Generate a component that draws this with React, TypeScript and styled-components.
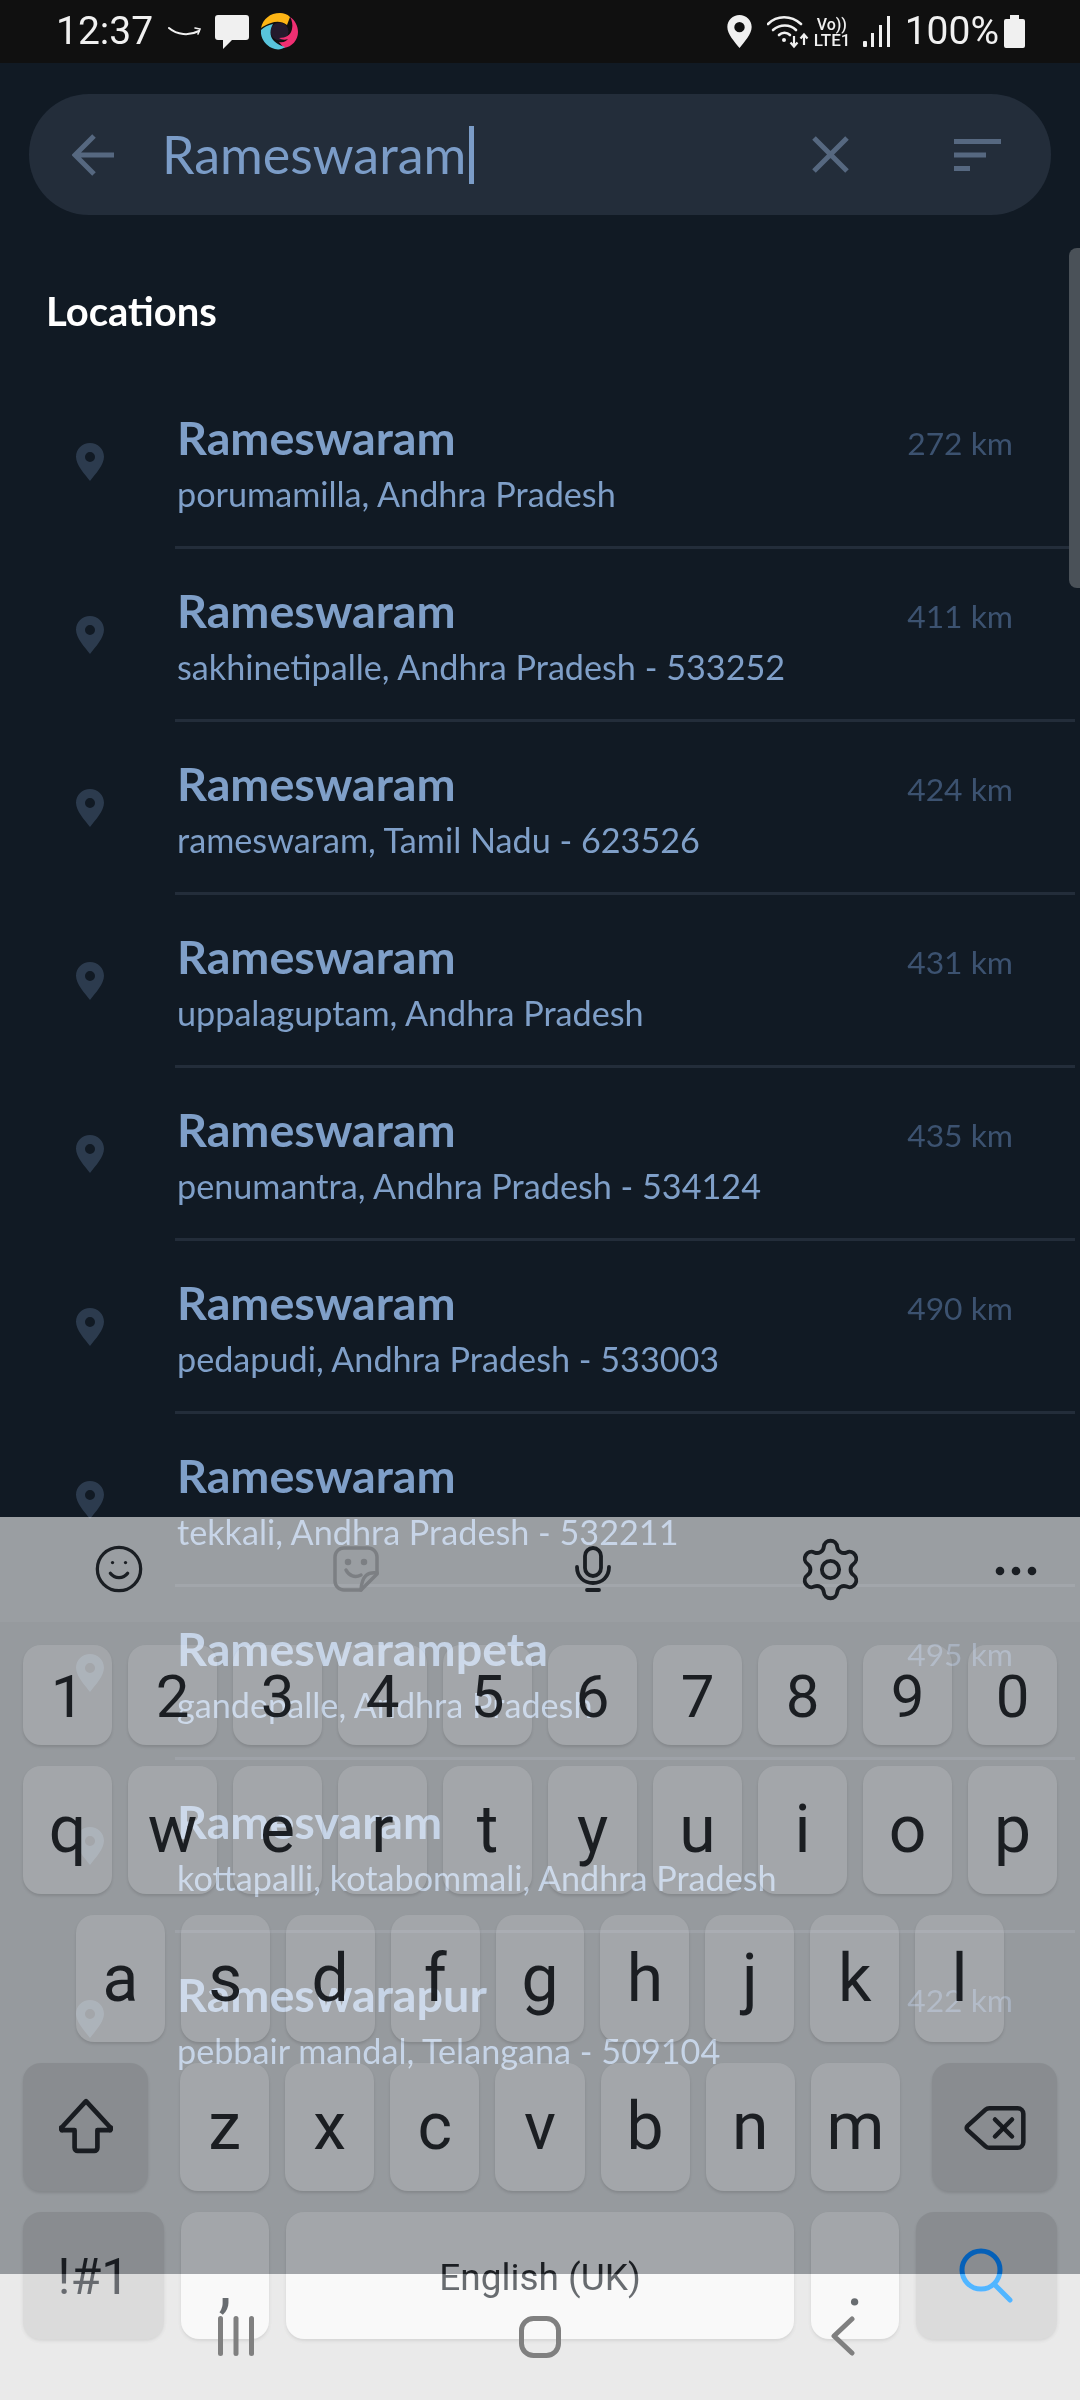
import React from 'react'
import styled, { createGlobalStyle } from 'styled-components'
import { Delete, Settings, Smile } from 'lucide-react'

const GlobalStyle = createGlobalStyle`
  html, body { margin: 0; padding: 0; background: #000; }
  * { box-sizing: border-box; }
`

const Screen = styled.div`
  position: relative;
  width: 1080px;
  height: 2400px;
  overflow: hidden;
  background: #000;
  font-family: Lato, "Liberation Sans", sans-serif;
`

/* status bar */
const StatusBar = styled.div`
  height: 63px;
  background: #101010;
  color: #f0f0f0;
  display: flex;
  align-items: center;
  justify-content: space-between;
  padding: 0 55px 0 56px;
  font-family: Roboto, sans-serif;
`
const StatusGroup = styled.div`
  display: flex;
  align-items: center;
`
const Clock = styled.span`
  font-size: 39px;
  line-height: 63px;
  margin-right: 15px;
`
const Percent = styled.span`
  font-size: 39px;
  line-height: 63px;
  margin: 0 5px 0 15px;
`
const Volte = styled.div`
  display: flex;
  flex-direction: column;
  font-weight: 500;
  margin: 0 9px 0 5px;
  width: 40px;
  span:first-child { font-size: 16px; line-height: 17px; padding-left: 3px; }
  span:last-child { font-size: 17px; line-height: 15px; }
`

/* app */
const Main = styled.div`
  height: 2211px;
  overflow: hidden;
  background: #111a24;
  position: relative;
  padding-top: 31px;
`
const SearchBar = styled.div`
  height: 121px;
  margin: 0 29px;
  border-radius: 60px;
  background: #232d3a;
  display: flex;
  align-items: center;
  padding-left: 43px;
  color: #566880;
`
const SearchText = styled.div`
  margin-left: 48px;
  padding-bottom: 2px;
  font-size: 52px;
  color: #7b9cc7;
  display: flex;
  align-items: center;
  flex: 1;
`
const Caret = styled.i`
  width: 5px;
  height: 58px;
  margin: 2px 0 0 3px;
  background: #7b9cc7;
`
const ClearIcon = styled.svg`
  margin-right: 105px;
`
const SortIcon = styled.svg`
  margin-right: 50px;
`
const Heading = styled.h2`
  margin: 0;
  padding: 72px 0 41px 46px;
  font-size: 40px;
  line-height: 48px;
  font-weight: 700;
  color: #fff;
`
const ScrollThumb = styled.div`
  position: absolute;
  right: 0;
  top: 185px;
  width: 11px;
  height: 340px;
  border-radius: 8px 0 0 8px;
  background: #4a5158;
`
const Row = styled.div`
  height: 173px;
  display: flex;
  padding-left: 76px;
`
const RowPin = styled.div`
  margin-top: 67px;
  color: #2c3b4e;
  flex: none;
`
const RowBody = styled.div<{ $last?: boolean }>`
  flex: 1;
  margin: 0 5px 0 71px;
  padding: 35px 62px 0 2px;
  border-bottom: 3px solid ${p => (p.$last ? 'transparent' : '#232d3a')};
`
const RowTop = styled.div`
  display: flex;
  justify-content: space-between;
  align-items: baseline;
`
const Title = styled.div`
  font-size: 46.700px;
  line-height: 52px;
  font-weight: 700;
  color: #7f9fc8;
`
const Distance = styled.span`
  font-size: 31.800px;
  color: #3c5270;
`
const Sub = styled.div`
  margin-top: 10px;
  font-size: 34.200px;
  line-height: 42px;
  color: #7f9fc8;
`

/* keyboard, laid over the list and lets it shine through */
const Keyboard = styled.div`
  position: absolute;
  left: 0;
  bottom: 0;
  width: 1080px;
  height: 883px;
  &::before {
    content: '';
    position: absolute;
    inset: 0;
    background: #8e8e8e;
    mix-blend-mode: screen;
  }
`
const Toolbar = styled.div`
  position: relative;
  height: 105px;
  background: rgba(255, 255, 255, 0.045);
  color: #1a1e23;
`
const ToolSlot = styled.div<{ $x: number; $y?: number }>`
  position: absolute;
  left: ${p => p.$x}px;
  top: ${p => p.$y ?? 26}px;
  width: 52px;
  height: 52px;
  display: flex;
  align-items: center;
  justify-content: center;
`
const KeyRows = styled.div`
  position: relative;
  padding-top: 23px;
  display: flex;
  flex-direction: column;
  gap: 21px;
`
const KeyRow = styled.div<{ $h: number; $side?: number; $gap?: number; $grow?: boolean }>`
  height: ${p => p.$h}px;
  padding: 0 ${p => p.$side ?? 23}px;
  display: flex;
  gap: ${p => p.$gap ?? 16}px;
  ${p => (p.$grow ? 'flex: 1;' : '')}
`
const Key = styled.div<{ $fn?: boolean; $w?: number; $pad?: number; $size?: number }>`
  ${p => (p.$w ? `flex: 0 0 ${p.$w}px;` : 'flex: 1 1 0;')}
  border-radius: 18px;
  background: ${p => (p.$fn ? 'rgba(0, 0, 0, 0.085)' : 'rgba(255, 255, 255, 0.125)')};
  box-shadow: 0 2px 3px rgba(0, 0, 0, 0.12);
  display: flex;
  justify-content: center;
  align-items: flex-start;
  padding-top: ${p => p.$pad ?? 31}px;
  font-family: Roboto, sans-serif;
  font-size: ${p => p.$size ?? 66}px;
  line-height: 1;
  color: rgba(18, 21, 26, 0.94);
`

const NavBar = styled.div`
  position: absolute;
  left: 0;
  bottom: 0;
  width: 1080px;
  height: 126px;
  backdrop-filter: contrast(0.654) brightness(1.705);
  display: flex;
  align-items: flex-start;
  gap: 265px;
  padding: 42px 0 0 218px;
  color: #808080;
`

const Pin = ({ w, h }: { w: number; h: number }) => (
  <svg width={w} height={h} viewBox="0 0 28 38" fill="currentColor">
    <path fillRule="evenodd" d="M14 0C6.3 0 0 6 0 13.8 0 22 8.5 31 14 38c5.500-7 14-16 14-24.200C28 6 21.700 0 14 0zm0 9a5 5 0 1 1 0 10 5 5 0 0 1 0-10z" />
  </svg>
)

const rows = [
  { t: 'Rameswaram', s: 'porumamilla, Andhra Pradesh', d: '272 km' },
  { t: 'Rameswaram', s: 'sakhinetipalle, Andhra Pradesh - 533252', d: '411 km' },
  { t: 'Rameswaram', s: 'rameswaram, Tamil Nadu - 623526', d: '424 km' },
  { t: 'Rameswaram', s: 'uppalaguptam, Andhra Pradesh', d: '431 km' },
  { t: 'Rameswaram', s: 'penumantra, Andhra Pradesh - 534124', d: '435 km' },
  { t: 'Rameswaram', s: 'pedapudi, Andhra Pradesh - 533003', d: '490 km' },
  { t: 'Rameswaram', s: 'tekkali, Andhra Pradesh - 532211', d: '' },
  { t: 'Rameswarampeta', s: 'gandepalle, Andhra Pradesh', d: '495 km' },
  { t: 'Ramesvaram', s: 'kottapalli, kotabommali, Andhra Pradesh', d: '' },
  { t: 'Rameswarapur', s: 'pebbair mandal, Telangana - 509104', d: '422 km' },
]

export default function App() {
  return (
    <Screen>
      <GlobalStyle />
      <StatusBar>
        <StatusGroup>
          <Clock>12:37</Clock>
          <svg width="34" height="14" viewBox="0 0 34 14" fill="none" stroke="#f0f0f0" strokeLinecap="round" style={{ marginRight: 13 }}>
            <path d="M1 3c8 7 20 8 30 3" strokeWidth="2" />
            <path d="M27 3l5 1-2 5" strokeWidth="1.600" />
          </svg>
          <svg width="34" height="34" viewBox="0 0 34 34" fill="#f0f0f0" style={{ marginRight: 12 }}>
            <path d="M3 0h28a3 3 0 0 1 3 3v19a3 3 0 0 1-3 3H17l-9 9v-9H3a3 3 0 0 1-3-3V3a3 3 0 0 1 3-3z" />
          </svg>
          <svg width="37" height="37" viewBox="0 0 37 37">
            <circle cx="18.500" cy="18.500" r="9" fill="#241a2c" />
            <path d="M0 15C2 6 9 0 19 0c4 0 7 1 10 4l-3 8c-5-4-11-4-16-2-4 1-7 3-10 5z" fill="#fdb515" />
            <path d="M29 4c5 3 8 9 8 15 0 8-6 15-14 16l-5-6c5 1 7-1 9-3-3 1-6 1-9-1 7 0 12-3 13-9 1-4 0-9-2-12z" fill="#ef2f72" />
            <path d="M0 17c3-3 7-5 12-6-3 5-4 12 1 17 3 3 7 5 11 6-3 3-9 3-13 1C4 32-1 24 0 17z" fill="#58c4dc" />
          </svg>
        </StatusGroup>
        <StatusGroup>
          <svg width="25" height="33" viewBox="0 0 28 38" fill="#f0f0f0" style={{ marginRight: 15 }}>
            <path fillRule="evenodd" d="M14 0C6.300 0 0 6 0 13.800 0 22 8.500 31 14 38c5.500-7 14-16 14-24.200C28 6 21.700 0 14 0zm0 8a6 6 0 1 1 0 12 6 6 0 0 1 0-12z" />
          </svg>
          <svg width="42" height="34" viewBox="0 0 42 34" fill="none" stroke="#f0f0f0" strokeWidth="2.600" strokeLinecap="round">
            <path d="M1 9c9-9 23-9 33 0" />
            <path d="M6 15c7-6 17-6 23 0" />
            <path d="M12 20c3-3 8-3 11 0" />
            <circle cx="17" cy="25" r="2" fill="#f0f0f0" stroke="none" />
            <path d="M27 21v10m-3.500-3.500 3.500 4 3.500-4M37 30V20m-3.500 3.500 3.500-4 3.500 4" strokeWidth="2.200" strokeLinecap="butt" />
          </svg>
          <Volte>
            <span>Vo))</span>
            <span>LTE1</span>
          </Volte>
          <svg width="27" height="32" viewBox="0 0 27 32" fill="#f0f0f0">
            <rect x="0" y="25" width="4" height="6" rx="1" />
            <rect x="8" y="17" width="3" height="14" />
            <rect x="16" y="9" width="3" height="22" />
            <rect x="24" y="0" width="3" height="31" />
          </svg>
          <Percent>100%</Percent>
          <svg width="21" height="33" viewBox="0 0 21 33" fill="#f0f0f0">
            <path d="M6 0h9v4h4a2 2 0 0 1 2 2v25a2 2 0 0 1-2 2H2a2 2 0 0 1-2-2V6a2 2 0 0 1 2-2h4z" />
          </svg>
        </StatusGroup>
      </StatusBar>

      <Main>
        <SearchBar>
          <svg width="42" height="42" viewBox="0 0 42 42" fill="none" stroke="currentColor" strokeWidth="5">
            <path d="M42 21H3M22 2 3 21l19 19" />
          </svg>
          <SearchText>
            Rameswaram
            <Caret />
          </SearchText>
          <ClearIcon width="37" height="37" viewBox="0 0 37 37" fill="none" stroke="currentColor" strokeWidth="5">
            <path d="M2 2l33 33M35 2 2 35" />
          </ClearIcon>
          <SortIcon width="47" height="32" viewBox="0 0 47 32" fill="currentColor">
            <rect width="47" height="5" />
            <rect y="13.500" width="32" height="5" />
            <rect y="27" width="16" height="5" />
          </SortIcon>
        </SearchBar>
        <Heading>Locations</Heading>
        <ScrollThumb />
        {rows.map((r, i) => (
          <Row key={i}>
            <RowPin>
              <Pin w={28} h={38} />
            </RowPin>
            <RowBody $last={i === rows.length - 1}>
              <RowTop>
                <Title>{r.t}</Title>
                {r.d && <Distance>{r.d}</Distance>}
              </RowTop>
              <Sub>{r.s}</Sub>
            </RowBody>
          </Row>
        ))}
      </Main>

      <Keyboard>
        <Toolbar>
          <ToolSlot $x={93}>
            <Smile size={60} strokeWidth={1.5} />
          </ToolSlot>
          <ToolSlot $x={330}>
            <svg width="46" height="46" viewBox="0 0 46 46" fill="none" stroke="#7c7f83" strokeWidth="3.500" strokeLinecap="round" strokeLinejoin="round">
              <path d="M28 44H11A9 9 0 0 1 2 35V11a9 9 0 0 1 9-9h24a9 9 0 0 1 9 9v17z" />
              <path d="M44 27c-9-1-15 2-16 17" />
              <path d="M13 24c3 6 9 8 15 5" />
              <circle cx="15" cy="16" r="1.500" fill="#7c7f83" />
              <circle cx="31" cy="16" r="1.500" fill="#7c7f83" />
            </svg>
          </ToolSlot>
          <ToolSlot $x={567}>
            <svg width="36" height="46" viewBox="0 0 36 46" fill="none" stroke="currentColor" strokeWidth="3.800" strokeLinecap="round">
              <rect x="10" y="2" width="16" height="28" rx="8" />
              <path d="M2 21c0 10 7 16 16 16s16-6 16-16" />
              <path d="M12 44h12" />
            </svg>
          </ToolSlot>
          <ToolSlot $x={804}>
            <Settings size={69} strokeWidth={1.350} style={{ flex: 'none' }} />
          </ToolSlot>
          <ToolSlot $x={990} $y={28}>
            <svg width="42" height="10" viewBox="0 0 42 10" fill="currentColor">
              <circle cx="5" cy="5" r="4.300" />
              <circle cx="21" cy="5" r="4.300" />
              <circle cx="37" cy="5" r="4.300" />
            </svg>
          </ToolSlot>
        </Toolbar>
        <KeyRows>
          <KeyRow $h={100}>
            {'1234567890'.split('').map(k => (
              <Key key={k} $pad={22} $size={60}>{k}</Key>
            ))}
          </KeyRow>
          <KeyRow $h={128}>
            {'qwertyuiop'.split('').map(k => (
              <Key key={k}>{k}</Key>
            ))}
          </KeyRow>
          <KeyRow $h={127} $side={76}>
            {'asdfghjkl'.split('').map(k => (
              <Key key={k}>{k}</Key>
            ))}
          </KeyRow>
          <KeyRow $h={128}>
            <Key $fn $w={125} $pad={35}>
              <svg width="54" height="56" viewBox="0 0 52 54" fill="none" stroke="currentColor" strokeWidth="4.500" strokeLinejoin="round">
                <path d="M26 3 3 28a1.500 1.500 0 0 0 1 3h11v17a3 3 0 0 0 3 3h16a3 3 0 0 0 3-3V31h11a1.500 1.500 0 0 0 1-3z" />
              </svg>
            </Key>
            <KeyRow $h={128} $side={16} $grow>
              {'zxcvbnm'.split('').map(k => (
                <Key key={k}>{k}</Key>
              ))}
            </KeyRow>
            <Key $fn $w={125} $pad={31}>
              <Delete size={68} strokeWidth={1.600} />
            </Key>
          </KeyRow>
          <KeyRow $h={127} $gap={17}>
            <Key $fn $w={141} $pad={40} $size={50}>!#1</Key>
            <Key $w={88} $pad={38}>,</Key>
            <Key $pad={47} $size={37}>English (UK)</Key>
            <Key $w={88} $pad={38}>.</Key>
            <Key $fn $w={141} $pad={36}>
              <svg width="56" height="56" viewBox="0 0 56 56" fill="none" stroke="#0560b8" strokeWidth="5" strokeLinecap="round">
                <circle cx="22" cy="22" r="19" />
                <path d="M36 37l15 15" />
              </svg>
            </Key>
          </KeyRow>
        </KeyRows>
      </Keyboard>

      <NavBar>
        <svg width="36" height="40" viewBox="0 0 36 40" fill="currentColor">
          <rect x="0" y="0" width="5" height="40" rx="2.500" />
          <rect x="15.500" y="0" width="5" height="40" rx="2.500" />
          <rect x="31" y="0" width="5" height="40" rx="2.500" />
        </svg>
        <svg width="42" height="42" viewBox="0 0 42 42" fill="none" stroke="currentColor" strokeWidth="5">
          <rect x="2.500" y="2.500" width="37" height="37" rx="12" />
        </svg>
        <svg width="24" height="40" viewBox="0 0 24 40" fill="none" stroke="currentColor" strokeWidth="5" strokeLinecap="round" strokeLinejoin="round" style={{ marginLeft: 5 }}>
          <path d="M21 3 3 20l18 17" />
        </svg>
      </NavBar>
    </Screen>
  )
}
